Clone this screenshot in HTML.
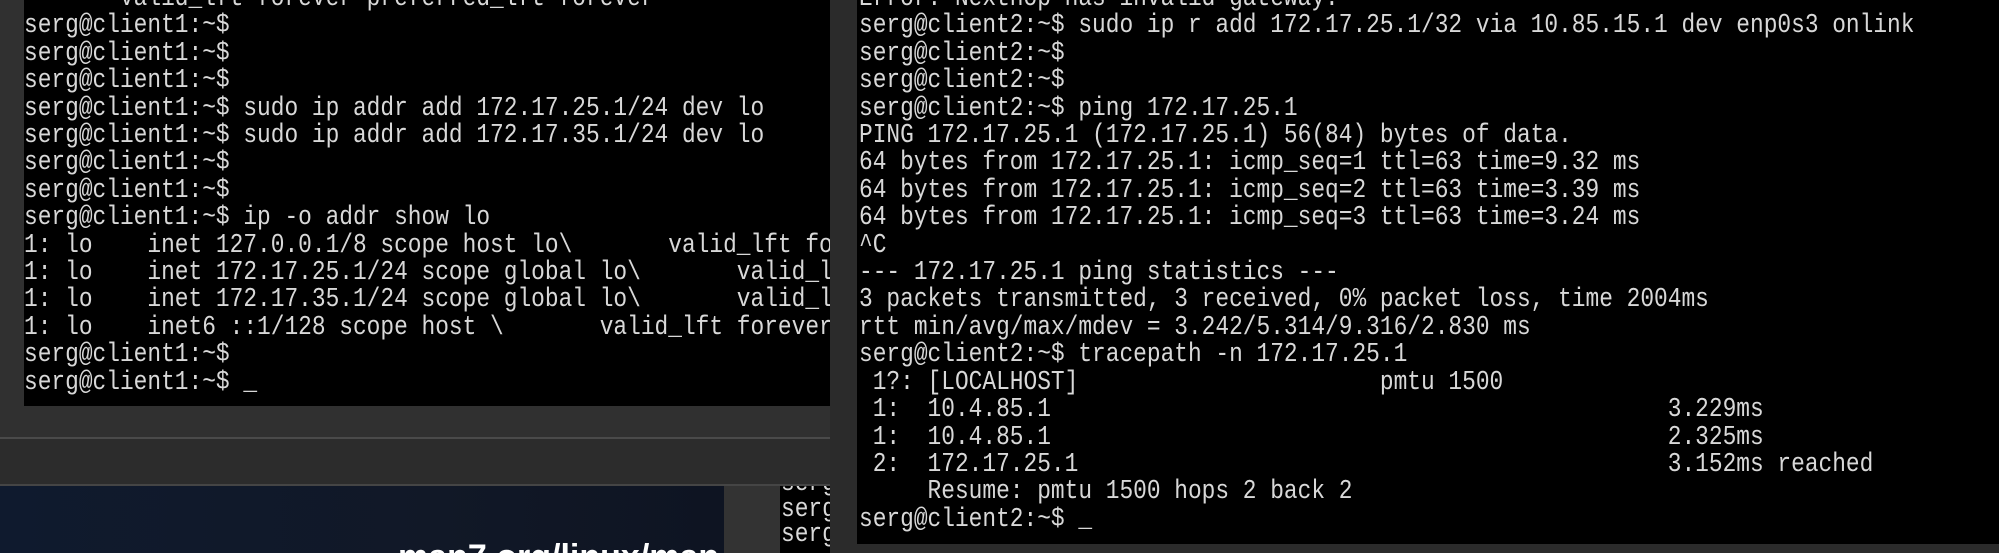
<!DOCTYPE html>
<html><head><meta charset="utf-8"><style>
html,body{margin:0;padding:0;width:1999px;height:553px;overflow:hidden;background:#2f2f2f;position:relative}
.box{position:absolute;overflow:hidden}
pre{margin:0;position:absolute;font-family:"Liberation Mono","DejaVu Sans Mono",monospace;font-size:27px;line-height:27.4px;color:#d8d8d8;transform:scaleX(0.846);transform-origin:0 0;white-space:pre}
</style></head><body>
<div class="box" style="left:0;top:0;width:830px;height:438px;background:#303030"></div>
<div class="box" style="left:0;top:437px;width:830px;height:2px;background:#4a4a4a"></div>
<div class="box" style="left:0;top:439px;width:830px;height:46px;background:#2c2c2c"></div>
<div class="box" style="left:0;top:484px;width:830px;height:2px;background:#454545"></div>
<div class="box" style="left:24px;top:0;width:806px;height:406px;background:#000">
<pre style="left:0;top:-14px">       valid_lft forever preferred_lft forever
serg@client1:~$
serg@client1:~$
serg@client1:~$
serg@client1:~$ sudo ip addr add 172.17.25.1/24 dev lo
serg@client1:~$ sudo ip addr add 172.17.35.1/24 dev lo
serg@client1:~$
serg@client1:~$
serg@client1:~$ ip -o addr show lo
1: lo    inet 127.0.0.1/8 scope host lo\       valid_lft forever preferred_lft forever
1: lo    inet 172.17.25.1/24 scope global lo\       valid_lft forever preferred_lft forever
1: lo    inet 172.17.35.1/24 scope global lo\       valid_lft forever preferred_lft forever
1: lo    inet6 ::1/128 scope host \       valid_lft forever preferred_lft forever
serg@client1:~$
serg@client1:~$ _</pre>
</div>
<div class="box" style="left:0;top:486px;width:724px;height:67px;background:linear-gradient(90deg,#0f1a2e,#111827 60%,#0e1422)">
<div style="position:absolute;left:398px;top:52px;font:bold 34px 'Liberation Sans',sans-serif;color:#fff">man7.org/linux/man</div>
</div>
<div class="box" style="left:724px;top:486px;width:56px;height:67px;background:#333"></div>
<div class="box" style="left:780px;top:486px;width:50px;height:67px;background:#000">
<pre style="left:1px;top:-14px;line-height:25.5px">serg
serg
serg</pre>
</div>
<div class="box" style="left:830px;top:0;width:1169px;height:553px;background:#2b2b2b"></div>
<div class="box" style="left:857px;top:0;width:1142px;height:544px;background:#000">
<pre style="left:2px;top:-14px">Error: Nexthop has invalid gateway.
serg@client2:~$ sudo ip r add 172.17.25.1/32 via 10.85.15.1 dev enp0s3 onlink
serg@client2:~$
serg@client2:~$
serg@client2:~$ ping 172.17.25.1
PING 172.17.25.1 (172.17.25.1) 56(84) bytes of data.
64 bytes from 172.17.25.1: icmp_seq=1 ttl=63 time=9.32 ms
64 bytes from 172.17.25.1: icmp_seq=2 ttl=63 time=3.39 ms
64 bytes from 172.17.25.1: icmp_seq=3 ttl=63 time=3.24 ms
^C
--- 172.17.25.1 ping statistics ---
3 packets transmitted, 3 received, 0% packet loss, time 2004ms
rtt min/avg/max/mdev = 3.242/5.314/9.316/2.830 ms
serg@client2:~$ tracepath -n 172.17.25.1
 1?: [LOCALHOST]                      pmtu 1500
 1:  10.4.85.1                                             3.229ms
 1:  10.4.85.1                                             2.325ms
 2:  172.17.25.1                                           3.152ms reached
     Resume: pmtu 1500 hops 2 back 2
serg@client2:~$ _</pre>
</div>
</body></html>
